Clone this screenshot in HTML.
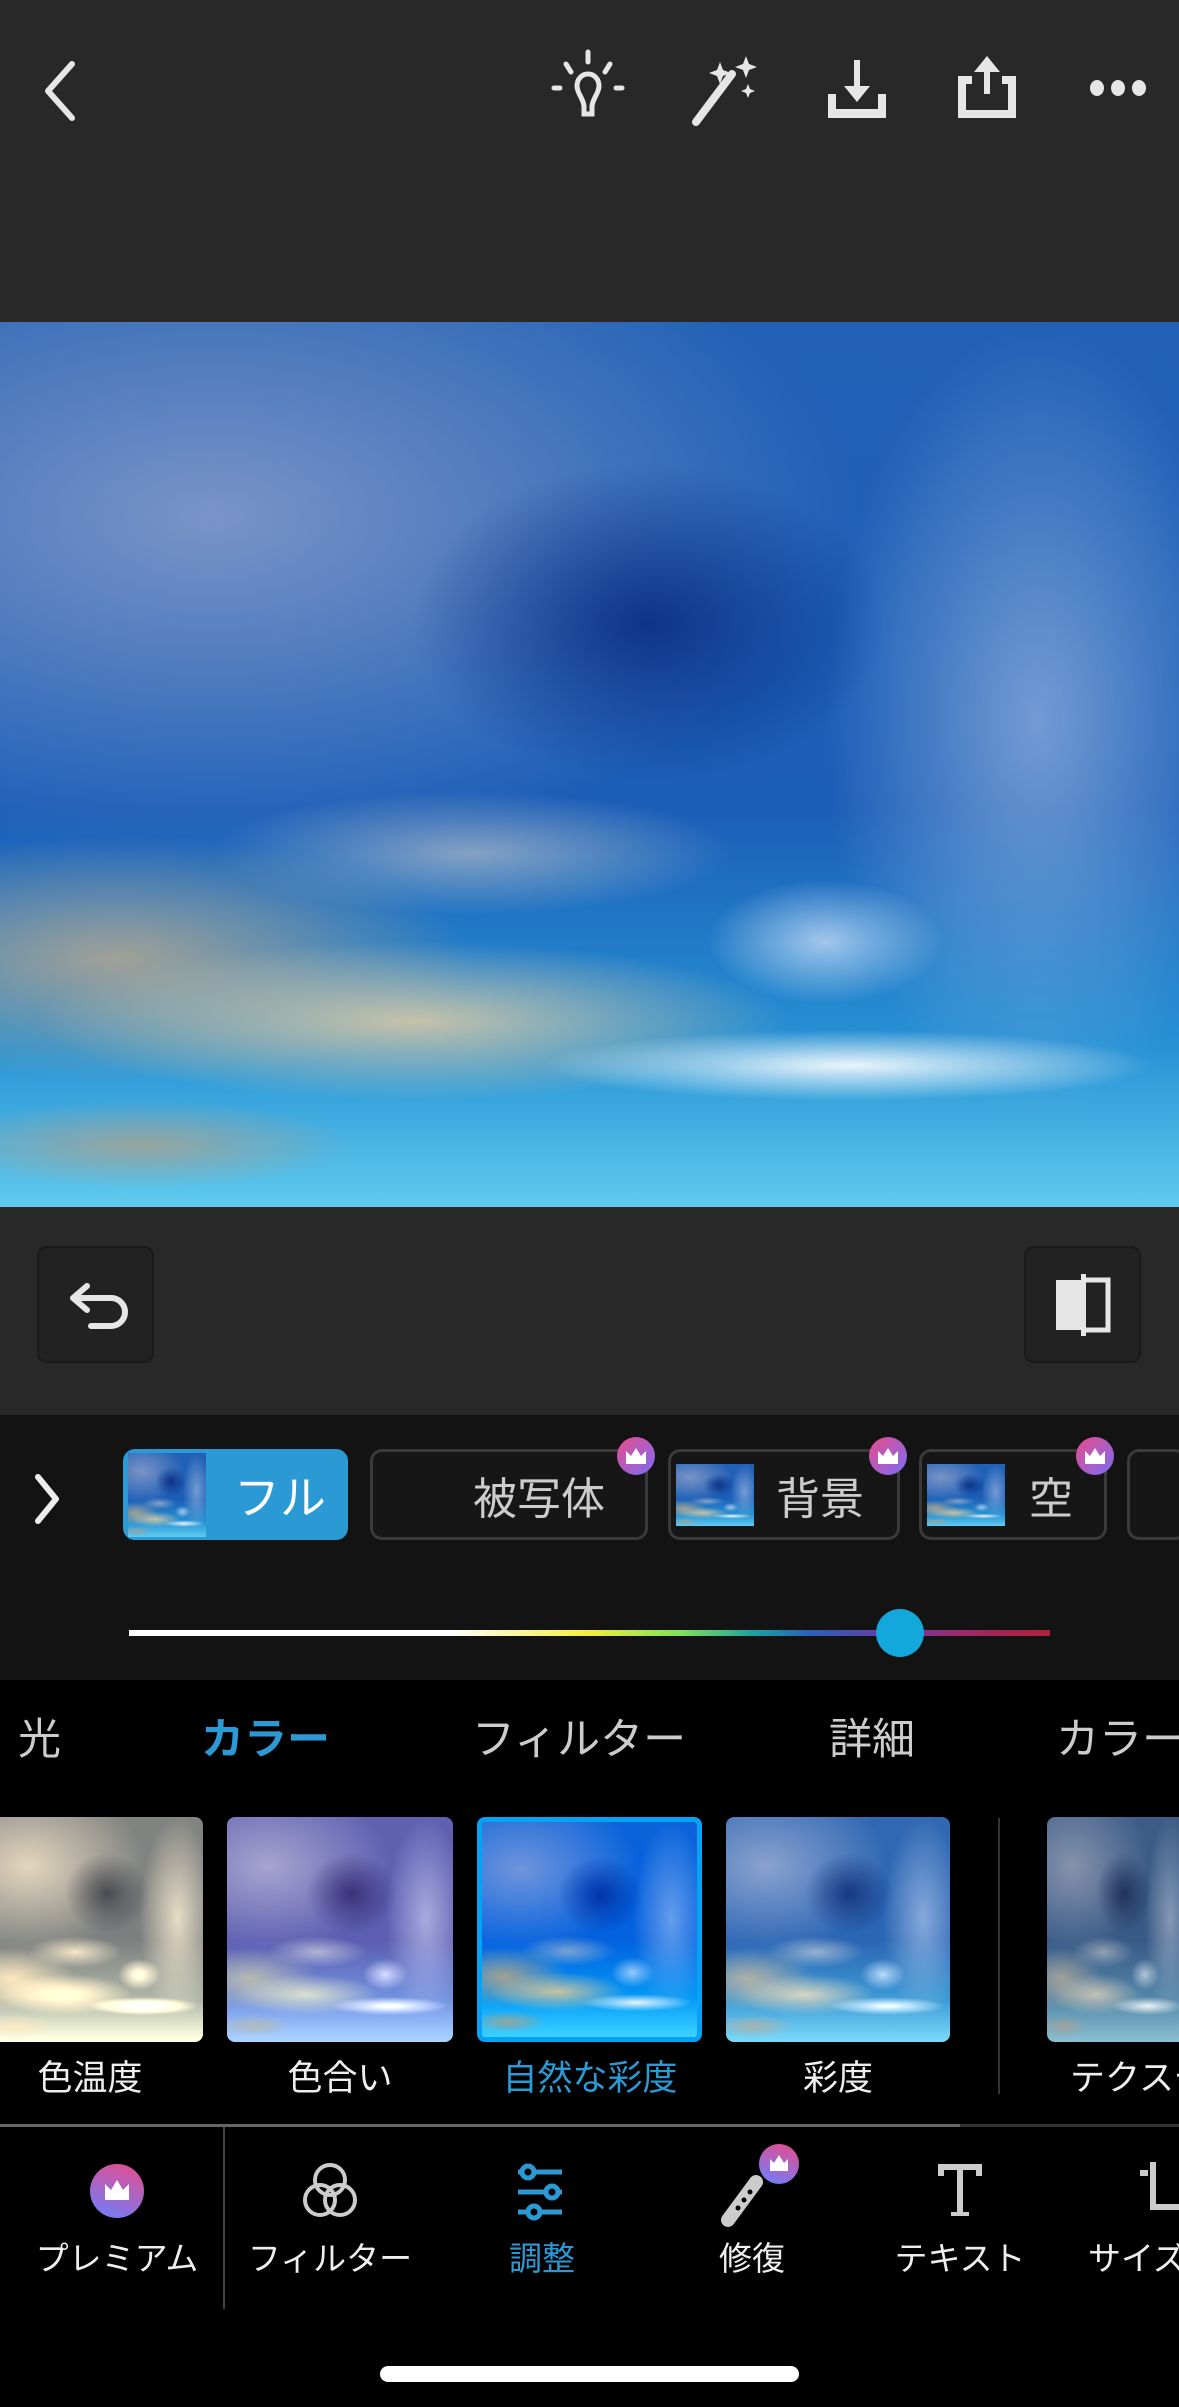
<!DOCTYPE html>
<html><head><meta charset="utf-8"><style>
*{margin:0;padding:0;box-sizing:border-box}
body{width:1179px;height:2407px;background:#000;position:relative;overflow:hidden;font-family:"Liberation Sans","Noto Sans CJK JP",sans-serif;color:#fff}
.abs{position:absolute;white-space:nowrap}
.sky{background:
 radial-gradient(ellipse 20% 18% at 55% 34%, rgba(8,45,130,.9), transparent 100%),
 radial-gradient(ellipse 26% 4% at 72% 84%, rgba(255,255,255,.9), transparent 100%),
 radial-gradient(ellipse 10% 7% at 70% 70%, rgba(230,240,255,.65), transparent 100%),
 radial-gradient(ellipse 32% 9% at 35% 79%, rgba(215,200,165,.9), transparent 100%),
 radial-gradient(ellipse 30% 14% at 10% 72%, rgba(175,165,145,.9), transparent 100%),
 radial-gradient(ellipse 22% 7% at 40% 60%, rgba(200,200,200,.6), transparent 100%),
 radial-gradient(ellipse 18% 5% at 12% 93%, rgba(170,160,140,.8), transparent 100%),
 radial-gradient(ellipse 55% 38% at 18% 22%, rgba(160,170,205,.7), transparent 100%),
 radial-gradient(ellipse 18% 45% at 88% 45%, rgba(185,205,235,.55), transparent 100%),
 linear-gradient(to bottom,#2160b5 0%,#1b5eb8 55%,#2792d4 82%,#5fcbef 100%)}
.top{left:0;top:0;width:1179px;height:322px;background:#282828}
.ctrl{left:0;top:1207px;width:1179px;height:208px;background:#282828}
.sel{left:0;top:1415px;width:1179px;height:265px;background:#131313}
.sqbtn{width:117px;height:117px;border:2px solid #1a1a1a;border-radius:10px;background:#222}
.chip{top:1449px;height:91px;border:3px solid #3a3a3a;border-radius:12px;background:#161616;color:#ccc;font-size:44px;display:flex;align-items:center}
.chip .th{width:78px;height:62px;margin-left:5px}
.crown{width:38px;height:38px;border-radius:50%;background:linear-gradient(135deg,#e94b8a,#7a6cf5);display:flex;align-items:center;justify-content:center}
.tab{top:1705px;font-size:43px;color:#ccc}
.thumb{top:1817px;height:225px;border-radius:8px}
.lbl{top:2050px;font-size:35px;color:#eee;text-align:center;width:240px}
.nav{top:2232px;font-size:33px;color:#eee;text-align:center;width:200px}
</style></head><body>
<div class="abs top">
<svg class="abs" style="left:36px;top:56px" width="50" height="70" viewBox="0 0 50 70"><path d="M36 8 L12 35 L36 62" stroke="#e6e6e6" stroke-width="6" fill="none" stroke-linecap="round" stroke-linejoin="round"/></svg>
<svg class="abs" style="left:548px;top:48px" width="80" height="80" viewBox="0 0 80 80" fill="none" stroke="#e6e6e6" stroke-width="5" stroke-linecap="round"><path d="M40 4v10M18 16l5 8M62 16l-5 8M6 40h6M68 40h6"/><path d="M40 26c-7 0-11 6-11 12 0 7 6 12 7 20v8h8v-8c1-8 7-13 7-20 0-6-4-12-11-12z" fill="none"/></svg>
<svg class="abs" style="left:688px;top:52px" width="76" height="76" viewBox="0 0 76 76" fill="#e6e6e6"><path d="M8 70 L44 22" stroke="#e6e6e6" stroke-width="8" stroke-linecap="round"/><path d="M32 10l3 8 8 3-8 3-3 8-3-8-8-3 8-3z"/><path d="M58 4l3 8 8 3-8 3-3 8-3-8-8-3 8-3z"/><path d="M60 32l2 5 5 2-5 2-2 5-2-5-5-2 5-2z"/></svg>
<svg class="abs" style="left:822px;top:58px" width="70" height="64" viewBox="0 0 70 64" fill="#e6e6e6"><rect x="32" y="2" width="6" height="32"/><path d="M22 28h26L35 44z"/><path d="M6 36v24h58V36h-8v15H14V36z"/></svg>
<svg class="abs" style="left:952px;top:52px" width="70" height="70" viewBox="0 0 70 70" fill="#e6e6e6"><rect x="32" y="14" width="6" height="28"/><path d="M22 20h26L35 4z"/><path d="M6 24v42h58V24H50v8h6v26H14V32h6v-8z"/></svg>
<svg class="abs" style="left:1088px;top:76px" width="60" height="24" viewBox="0 0 60 24" fill="#e6e6e6"><ellipse cx="9" cy="12" rx="7" ry="8"/><ellipse cx="30" cy="12" rx="7" ry="8"/><ellipse cx="51" cy="12" rx="7" ry="8"/></svg>
</div>
<div class="abs sky" style="left:0;top:322px;width:1179px;height:885px"></div>
<div class="abs ctrl">
<div class="abs sqbtn" style="left:37px;top:39px"><svg width="113" height="113" viewBox="0 0 113 113"><path d="M38 50h34a14 14 0 0 1 0 28H52" stroke="#e6e6e6" stroke-width="6" fill="none" stroke-linecap="round"/><path d="M48 38L34 50l14 12" stroke="#e6e6e6" stroke-width="6" fill="none" stroke-linecap="round" stroke-linejoin="round"/></svg></div>
<div class="abs sqbtn" style="left:1024px;top:39px"><svg width="113" height="113" viewBox="0 0 113 113"><rect x="30" y="32" width="26" height="50" fill="#e6e6e6"/><path d="M60 32h22v50H60" stroke="#e6e6e6" stroke-width="5" fill="none"/><rect x="55" y="26" width="5" height="62" fill="#e6e6e6"/></svg></div>
</div>
<div class="abs sel">
<svg class="abs" style="left:28px;top:54px" width="40" height="60" viewBox="0 0 40 60"><path d="M10 8l18 22-18 22" stroke="#eee" stroke-width="6" fill="none" stroke-linecap="round" stroke-linejoin="round"/></svg>
</div>
<div class="abs chip" style="left:123px;width:225px;background:#2b9ad4;border-color:#2b9ad4;color:#fff;font-size:46px"><div class="th sky" style="width:78px;height:84px;margin-left:2px"></div><span style="margin-left:28px">フル</span></div>
<div class="abs chip" style="left:370px;width:278px"><span style="margin-left:100px">被写体</span></div>
<div class="abs crown" style="left:617px;top:1437px"><svg width="22" height="18" viewBox="0 0 22 18"><path d="M1 4l5 5 5-8 5 8 5-5v13H1z" fill="#fff"/></svg></div>
<div class="abs chip" style="left:668px;width:232px"><div class="th sky"></div><span style="margin-left:22px">背景</span></div>
<div class="abs crown" style="left:869px;top:1437px"><svg width="22" height="18" viewBox="0 0 22 18"><path d="M1 4l5 5 5-8 5 8 5-5v13H1z" fill="#fff"/></svg></div>
<div class="abs chip" style="left:919px;width:188px"><div class="th sky"></div><span style="margin-left:24px">空</span></div>
<div class="abs crown" style="left:1076px;top:1437px"><svg width="22" height="18" viewBox="0 0 22 18"><path d="M1 4l5 5 5-8 5 8 5-5v13H1z" fill="#fff"/></svg></div>
<div class="abs chip" style="left:1127px;width:60px"></div>
<div class="abs" style="left:129px;top:1630px;width:921px;height:6px;background:linear-gradient(to right,#fff 0%,#fff 35%,#f2ee3a 50%,#7fe05a 60%,#1aa0a0 68%,#2a5fb8 74%,#6a3aa8 83%,#9a2a6a 90%,#b0203a 100%)"></div>
<div class="abs" style="left:876px;top:1609px;width:48px;height:48px;border-radius:50%;background:#12a8dc"></div>
<div class="abs tab" style="left:18px">光</div>
<div class="abs tab" style="left:201px;color:#2b9ad4;font-weight:bold">カラー</div>
<div class="abs tab" style="left:472px">フィルター</div>
<div class="abs tab" style="left:829px">詳細</div>
<div class="abs tab" style="left:1056px">カラー</div>
<div class="abs thumb sky" style="left:-10px;width:213px;filter:sepia(.8) brightness(1.25) saturate(.9)"></div>
<div class="abs thumb sky" style="left:227px;width:226px;filter:hue-rotate(25deg) saturate(.6) brightness(1.15)"></div>
<div class="abs thumb sky" style="left:477px;width:225px;border:5px solid #2b9ad4;filter:saturate(1.4)"></div>
<div class="abs thumb sky" style="left:726px;width:224px;filter:saturate(.8) brightness(1.1)"></div>
<div class="abs" style="left:998px;top:1818px;width:2px;height:276px;background:#333"></div>
<div class="abs thumb sky" style="left:1047px;width:140px;filter:saturate(.5)"></div>
<div class="abs lbl" style="left:-30px">色温度</div>
<div class="abs lbl" style="left:220px">色合い</div>
<div class="abs lbl" style="left:470px;color:#2b9ad4">自然な彩度</div>
<div class="abs lbl" style="left:718px">彩度</div>
<div class="abs lbl" style="left:1020px;text-align:left;padding-left:50px;width:160px;overflow:hidden">テクスチャ</div>
<div class="abs" style="left:0;top:2124px;width:960px;height:3px;background:#666"></div>
<div class="abs" style="left:960px;top:2124px;width:219px;height:3px;background:#333"></div>
<div class="abs" style="left:223px;top:2127px;width:2px;height:182px;background:#444"></div>
<div class="abs" style="left:90px;top:2164px;width:54px;height:54px;border-radius:50%;background:linear-gradient(20deg,#6a80ff,#e94b8a)"><svg width="54" height="54" viewBox="0 0 54 54"><path d="M15 20l6 6 6-10 6 10 6-6v16H15z" fill="#fff"/></svg></div>
<svg class="abs" style="left:300px;top:2160px" width="60" height="64" viewBox="0 0 60 64" fill="none" stroke="#ccc" stroke-width="4"><circle cx="30" cy="20" r="15"/><circle cx="20" cy="40" r="15"/><circle cx="40" cy="40" r="15"/></svg>
<svg class="abs" style="left:512px;top:2162px" width="60" height="60" viewBox="0 0 60 60" fill="none" stroke="#2b9ad4" stroke-width="5"><path d="M6 10h44M6 30h44M6 50h44"/><circle cx="16" cy="10" r="6" fill="#000"/><circle cx="40" cy="30" r="6" fill="#000"/><circle cx="22" cy="50" r="6" fill="#000"/></svg>
<svg class="abs" style="left:720px;top:2168px" width="60" height="60" viewBox="0 0 60 60"><path d="M8 52L36 14" stroke="#ccc" stroke-width="14" stroke-linecap="round"/><circle cx="18" cy="40" r="2.5" fill="#000"/><circle cx="24" cy="32" r="2.5" fill="#000"/><circle cx="30" cy="24" r="2.5" fill="#000"/></svg>
<div class="abs" style="left:759px;top:2144px;width:40px;height:40px;border-radius:50%;background:linear-gradient(20deg,#6a80ff,#e94b8a)"><svg width="40" height="40" viewBox="0 0 40 40"><path d="M11 15l4 4 5-8 5 8 4-4v12H11z" fill="#fff"/></svg></div>
<svg class="abs" style="left:936px;top:2162px" width="48" height="56" viewBox="0 0 48 56" fill="#ccc"><path d="M2 2h44v12h-6V8H27v42h6v4H15v-4h6V8H8v6H2z"/></svg>
<svg class="abs" style="left:1140px;top:2160px" width="39" height="60" viewBox="0 0 39 60" fill="#ccc"><rect x="0" y="10" width="8" height="6"/><rect x="10" y="2" width="6" height="48"/><rect x="10" y="44" width="29" height="6"/></svg>
<div class="abs nav" style="left:17px">プレミアム</div>
<div class="abs nav" style="left:230px">フィルター</div>
<div class="abs nav" style="left:442px;color:#2b9ad4">調整</div>
<div class="abs nav" style="left:652px">修復</div>
<div class="abs nav" style="left:860px">テキスト</div>
<div class="abs nav" style="left:1088px;text-align:left;width:91px;overflow:hidden">サイズ</div>
<div class="abs" style="left:380px;top:2366px;width:419px;height:16px;border-radius:8px;background:#fff"></div>
</body></html>
